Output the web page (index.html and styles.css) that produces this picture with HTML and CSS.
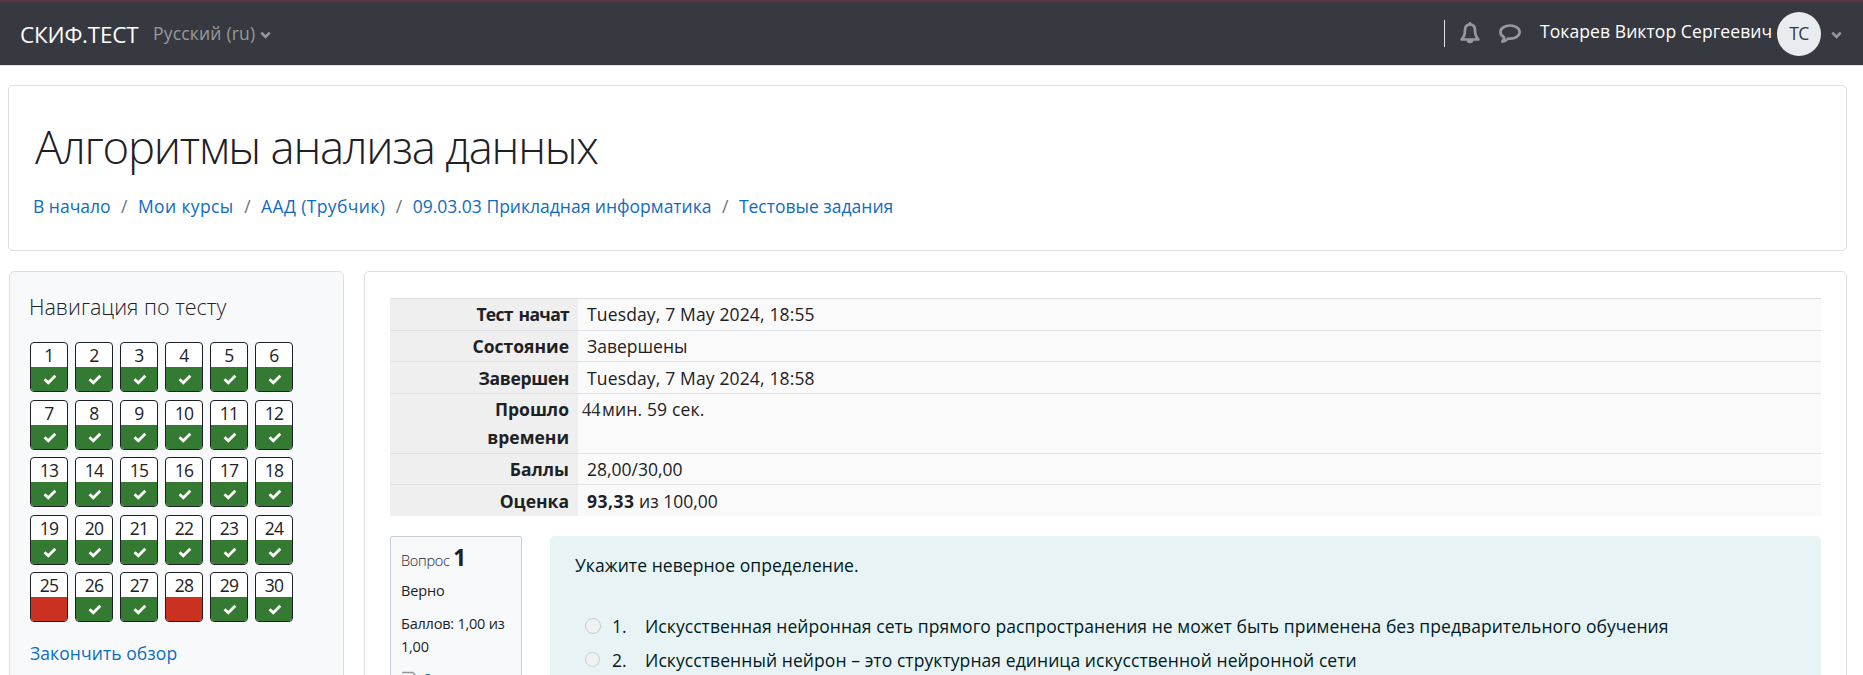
FILE: index.html
```html
<!DOCTYPE html>
<html lang="ru">
<head>
<meta charset="utf-8">
<title>Алгоритмы анализа данных</title>
<link rel="stylesheet" href="styles.css">
</head>
<body>
<header class="navbar">
  <a class="brand">СКИФ.ТЕСТ</a>
  <a class="lang">Русский (ru)</a>
  <svg class="chev" viewBox="0 0 11 8"><path d="M1.300 1.600 5.500 5.800 9.700 1.600"/></svg>
  <div class="user">
    <span class="divider"></span>
    <svg class="bell" viewBox="0 0 20 22"><path class="line" d="M10 2.400C6.700 2.700 5 5.100 5 8C5 12.500 4 15 1.700 17.500H18.300C16 15 15 12.500 15 8C15 5.100 13.300 2.700 10 2.400Z"/><path class="fill" d="M8.700 2.500V1.300a1.300 1.300 0 0 1 2.600 0V2.500ZM6.600 18h6.800a3.400 3.200 0 0 1-6.800 0Z"/></svg>
    <svg class="bubble" viewBox="0 0 22 20"><path class="line" d="M11 1.500C5.700 1.500 1.400 4.400 1.400 8.100C1.400 10.300 2.900 12.200 5.200 13.400C5 15.200 4.200 16.500 3.200 17.600C5.700 17.200 7.600 16.200 9 14.600C9.700 14.700 10.300 14.700 11 14.700C16.300 14.700 20.600 11.800 20.600 8.100C20.600 4.400 16.300 1.500 11 1.500Z"/></svg>
    <span class="username">Токарев Виктор Сергеевич</span>
    <span class="avatar">ТС</span>
    <svg class="chev" viewBox="0 0 11 8"><path d="M1.300 1.600 5.500 5.800 9.700 1.600"/></svg>
  </div>
</header>

<section class="page-header">
  <h1>Алгоритмы анализа данных</h1>
  <nav class="crumbs">
    <a>В начало</a><i>/</i><a class="wide">Мои курсы</a><i>/</i><a class="wide">ААД (Трубчик)</a><i>/</i><a>09.03.03 Прикладная информатика</a><i>/</i><a>Тестовые задания</a>
  </nav>
</section>

<div class="columns">
  <aside class="quiz-nav">
    <h2>Навигация по тесту</h2>
    <div class="buttons" id="buttons"></div>
    <a class="finish">Закончить обзор</a>
  </aside>

  <main class="content">
    <div class="summary">
      <div class="row r32"><b class="t1">Тест начат</b><span class="date">Tuesday, 7 May 2024, 18:55</span></div>
      <div class="row r31"><b>Состояние</b><span>Завершены</span></div>
      <div class="row r32 low"><b class="t3">Завершен</b><span class="date">Tuesday, 7 May 2024, 18:58</span></div>
      <div class="row r60"><b>Прошло<br>времени</b><span class="elapsed"><em>44</em>мин. 59 сек.</span></div>
      <div class="row r31"><b>Баллы</b><span>28,00/30,00</span></div>
      <div class="row r32 low"><b>Оценка</b><span><strong>93,33</strong> из 100,00</span></div>
    </div>

    <div class="question">
      <div class="info">
        <p class="no">Вопрос <strong>1</strong></p>
        <p class="state">Верно</p>
        <p class="grade">Баллов: 1,00 из 1,00</p>
        <p class="flag"><svg viewBox="0 0 16 16"><path d="M1 1.500H12L14 4V10H3V15"/></svg><a>Отметить вопрос</a></p>
      </div>
      <div class="formulation">
        <p class="qtext">Укажите неверное определение.</p>
        <div class="option"><span class="radio"></span><span class="num">1.</span><span class="o1">Искусственная нейронная сеть прямого распространения не может быть применена без предварительного обучения</span></div>
        <div class="option"><span class="radio small"></span><span class="num">2.</span><span class="o2">Искусственный нейрон – это структурная единица искусственной нейронной сети</span></div>
      </div>
    </div>
  </main>
</div>
<script src="nav.js"></script>
</body>
</html>
```
FILE: styles.css
```css
* { box-sizing: border-box; }
body {
  margin: 0;
  height: 675px;
  overflow: hidden;
  background: #fff;
  color: #1d2125;
  font: 17.5px/28px "Open Sans", "Noto Sans", sans-serif;
}
h1, h2, p { margin: 0; font-weight: 300; }
a { color: #0f6cbf; }

.navbar {
  display: flex;
  align-items: flex-start;
  height: 66px;
  padding-left: 20px;
  background: #363940;
  border-top: 2px solid #5a3238;
  border-bottom: 1px solid #dee2e6;
}
.brand { width: 133px; margin-top: 18px; font-size: 22.5px; line-height: 30px; letter-spacing: -.2px; color: #fff; }
.lang { margin-top: 17px; width: 107px; letter-spacing: .19px; color: #97999c; }
.chev { width: 11px; height: 8px; margin-top: 29px; fill: none; stroke: #97999c; stroke-width: 2.6; }
.user { display: flex; align-items: flex-start; margin-left: auto; padding-right: 21px; }
.divider { width: 1px; height: 27px; margin: 18px 15px 0 0; background: #dee2e6; }
.bell { width: 20px; height: 22px; margin: 20px 19px 0 0; }
.bubble { width: 22px; height: 20px; margin: 22px 19px 0 0; }
.line { fill: none; stroke: #97999c; stroke-width: 2.7; stroke-linejoin: round; }
.fill { fill: #97999c; }
.username { margin-top: 15px; width: 237px; letter-spacing: .088px; color: #fff; white-space: nowrap; }
.avatar { width: 44px; height: 44px; margin: 10px 10px 0 0; border-radius: 50%; background: #e9ecef; color: #343a40; text-align: center; line-height: 43px; letter-spacing: -.5px; }

.page-header {
  margin: 19px 16px 0 8px;
  height: 166px;
  padding: 32px 26px 0;
  border: 1px solid #dee0e2;
  border-radius: 5px;
}
h1 { font-size: 45.5px; line-height: 56px; letter-spacing: -1.25px; white-space: nowrap; }
.crumbs { display: flex; margin: 18px 0 0 -2px; white-space: nowrap; }
.crumbs i { width: 27.4px; text-align: center; font-style: normal; color: #6a737b; }
.crumbs .wide { letter-spacing: .38px; }

.columns { display: flex; align-items: flex-start; gap: 20px; height: 404px; overflow: hidden; padding: 0 16px 0 9px; margin-top: 20px; }
.quiz-nav { width: 335px; height: 410px; padding: 21px 20px; border: 1px solid #dcdfe2; border-radius: 5px; background: #f8f9fb; }
h2 { font-size: 21.5px; line-height: 28px; white-space: nowrap; margin-left: -1px; }
.buttons { display: grid; grid-template-columns: repeat(6, 38px); grid-auto-rows: 50px; gap: 7.5px 7px; margin-top: 21px; }
.qb { border: 1px solid #1d2125; border-radius: 4px; overflow: hidden; background: #fff; color: #1d2125; text-align: center; }
.qb span { display: block; height: 24px; line-height: 25px; letter-spacing: -.7px; }
.qb i { display: flex; align-items: center; justify-content: center; height: 24px; background: #357a32; }
.qb.wrong i { background: #ca3120; }
.qb svg { width: 14px; height: 11px; margin: 1px 0 0 1px; fill: none; stroke: #fff; stroke-width: 2.8; }
.finish { display: block; margin-top: 17px; letter-spacing: .08px; }

.content { flex: 1; height: 410px; padding: 26px 25px 0 25px; border: 1px solid #dee0e2; border-radius: 5px; }
.row { display: grid; grid-template-columns: 188px 1fr; background: #fafafa; border-top: 1px solid #dee2e6; overflow: hidden; }
.row > * { padding: 1px 9px 0; }
.row.low > * { padding-top: 2px; }
.row b { background: #efefef; text-align: right; }
.r32 { height: 32px; }
.r31 { height: 31px; }
.r60 { height: 60px; }
.t1 { letter-spacing: -.7px; word-spacing: 2px; }
.t3 { letter-spacing: -.35px; }
.date { letter-spacing: .15px; }
.row .elapsed { padding-left: 4px; letter-spacing: .15px; }
.elapsed em { display: inline-block; width: 20px; font: 18.5px/20px "Liberation Serif", serif; letter-spacing: 0; color: #2c2c2e; }
.row strong { letter-spacing: .5px; }

.question { display: flex; gap: 28px; margin-top: 20px; }
.info { width: 132px; height: 150px; padding: 9px 10px; border: 1px solid #cad0d7; border-radius: 2px; background: #f8f9fa; font-size: 14.5px; line-height: 23px; }
.no { letter-spacing: -.28px; white-space: nowrap; }
.no strong { font-size: 22.5px; line-height: 23px; font-weight: 700; }
.state, .grade, .flag a { font-weight: 400; }
.state { margin-top: 7px; letter-spacing: -.14px; }
.grade { margin-top: 10px; letter-spacing: -.22px; }
.flag { display: flex; gap: 5px; margin-top: 9px; white-space: nowrap; overflow: hidden; }
.flag svg { flex: none; width: 16px; height: 16px; margin-top: 4px; fill: none; stroke: #999; stroke-width: 1.5; }
.formulation { flex: 1; height: 150px; padding: 15px 25px; border-radius: 5px; background: #e7f3f5; color: #001a1e; }
.qtext { margin-bottom: 33px; font-weight: 400; letter-spacing: .06px; }
.option { display: flex; height: 33.5px; white-space: nowrap; }
.radio { width: 16px; height: 16px; margin: 6px 11px 0 10px; border: 1px solid #c8cccd; border-radius: 50%; background: #eff2f3; }
.small { width: 15px; height: 15px; margin: 6px 12px 0 10px; }
.num { width: 33px; }
.o1 { letter-spacing: .057px; }
.o2 { letter-spacing: .08px; }
```
FILE: nav.js
```js
const wrong = new Set([25, 28]);
const check = '<svg viewBox="0 0 14 11"><path d="M1.500 5.200 5.300 8.700 12.300 1.700"/></svg>';
let html = '';
for (let n = 1; n <= 30; n++) {
  const bad = wrong.has(n);
  html += `<a class="qb${bad ? ' wrong' : ''}"><span>${n}</span><i>${bad ? '' : check}</i></a>`;
}
document.getElementById('buttons').innerHTML = html;
```
